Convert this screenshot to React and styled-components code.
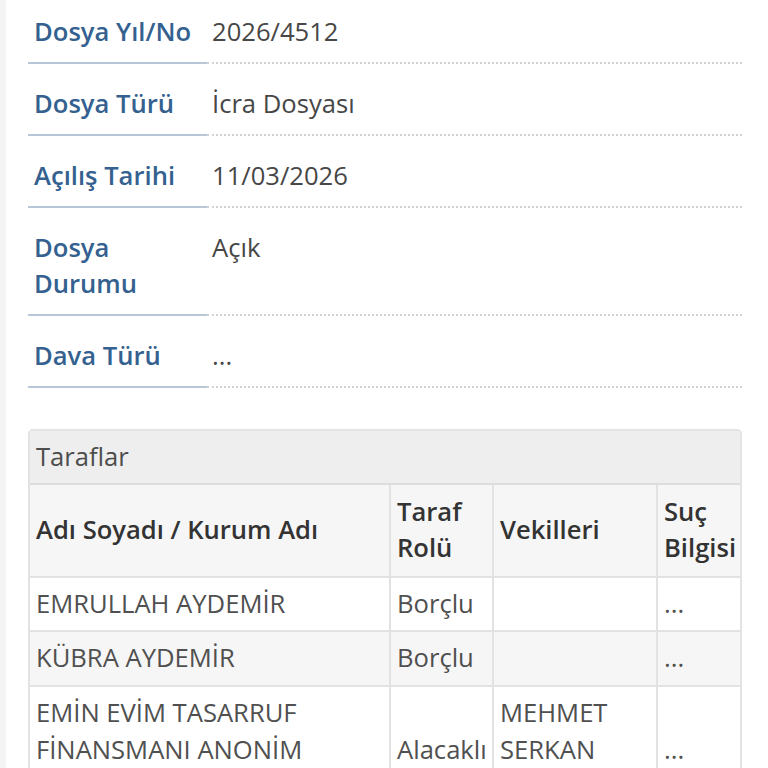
import styled, { createGlobalStyle } from "styled-components";

const GlobalStyle = createGlobalStyle`
  html, body {
    margin: 0;
    padding: 0;
    background: #ffffff;
  }
  body {
    font-family: "Open Sans", "Noto Sans", sans-serif;
    -webkit-font-smoothing: antialiased;
  }
`;

const details = [
  { label: "Dosya Yıl/No", value: "2026/4512" },
  { label: "Dosya Türü", value: "İcra Dosyası" },
  { label: "Açılış Tarihi", value: "11/03/2026" },
  { label: "Dosya Durumu", value: "Açık" },
  { label: "Dava Türü", value: "..." },
];

const parties = [
  { name: "EMRULLAH AYDEMİR", role: "Borçlu", lawyers: "", crime: "..." },
  { name: "KÜBRA AYDEMİR", role: "Borçlu", lawyers: "", crime: "..." },
  {
    name: "EMİN EVİM TASARRUF FİNANSMANI ANONİM ŞİRKETİ",
    role: "Alacaklı",
    lawyers: "MEHMET SERKAN YILDIZ",
    crime: "...",
  },
];

function App() {
  return (
    <>
      <GlobalStyle />
      <Page>
        <DetailList>
          {details.map((d) => (
            <DetailRow key={d.label}>
              <Label>{d.label}</Label>
              <Value>{d.value}</Value>
            </DetailRow>
          ))}
        </DetailList>

        <Panel>
          <PanelHeading>Taraflar</PanelHeading>
          <Table>
            <colgroup>
              <col style={{ width: "360px" }} />
              <col style={{ width: "103px" }} />
              <col style={{ width: "164px" }} />
              <col />
            </colgroup>
            <thead>
              <tr>
                <Th>Adı Soyadı / Kurum Adı</Th>
                <Th>Taraf Rolü</Th>
                <Th>Vekilleri</Th>
                <Th>Suç Bilgisi</Th>
              </tr>
            </thead>
            <tbody>
              {parties.map((p, i) => (
                <Tr key={p.name} $striped={i % 2 === 1}>
                  <Td>{p.name}</Td>
                  <Td>{p.role}</Td>
                  <Td>{p.lawyers}</Td>
                  <Td>{p.crime}</Td>
                </Tr>
              ))}
            </tbody>
          </Table>
        </Panel>
      </Page>
    </>
  );
}

export default App;

const Page = styled.div`
  border-left: 6px solid #f4f4f4;
  padding: 0 26px 40px 22px;
  min-height: 768px;
  box-sizing: border-box;
  overflow: hidden;
`;

const DetailList = styled.dl`
  margin: -8px 0 0;
  padding: 0;
`;

const DetailRow = styled.div`
  display: grid;
  grid-template-columns: 179px 1fr;
`;

const Label = styled.dt`
  margin: 0;
  padding: 22px 6px 12px;
  font-size: 25.6px;
  line-height: 36px;
  font-weight: 600;
  color: #34618f;
  border-bottom: 2px solid #b7c7d8;
`;

const Value = styled.dd`
  margin: 0;
  padding: 22px 5px 12px;
  font-size: 25.6px;
  line-height: 36px;
  color: #474747;
  border-bottom: 2px dotted #d2d2d2;
`;

const Panel = styled.div`
  margin-top: 41px;
  border: 2px solid #e3e3e3;
  border-radius: 5px;
  overflow: hidden;
`;

const PanelHeading = styled.div`
  background: #eeeeee;
  padding: 8px 6px 7px;
  font-size: 25.6px;
  line-height: 36.6px;
  color: #4d4d4d;
  border-bottom: 2px solid #dddddd;
`;

const Table = styled.table`
  width: 100%;
  border-collapse: collapse;
  table-layout: fixed;
  font-size: 25.6px;
  line-height: 36.6px;
`;

const Th = styled.th`
  background: #f6f6f6;
  text-align: left;
  font-weight: 600;
  color: #333333;
  padding: 9px 6px;
  vertical-align: middle;
  border-left: 2px solid #e2e2e2;
  border-bottom: 2px solid #e2e2e2;
  &:first-child {
    border-left: none;
  }
`;

const Tr = styled.tr`
  background: ${(p) => (p.$striped ? "#f6f6f6" : "#ffffff")};
`;

const Td = styled.td`
  padding: 8px 6px;
  color: #505050;
  vertical-align: middle;
  border-left: 2px solid #e2e2e2;
  border-bottom: 2px solid #e2e2e2;
  &:first-child {
    border-left: none;
  }
`;
